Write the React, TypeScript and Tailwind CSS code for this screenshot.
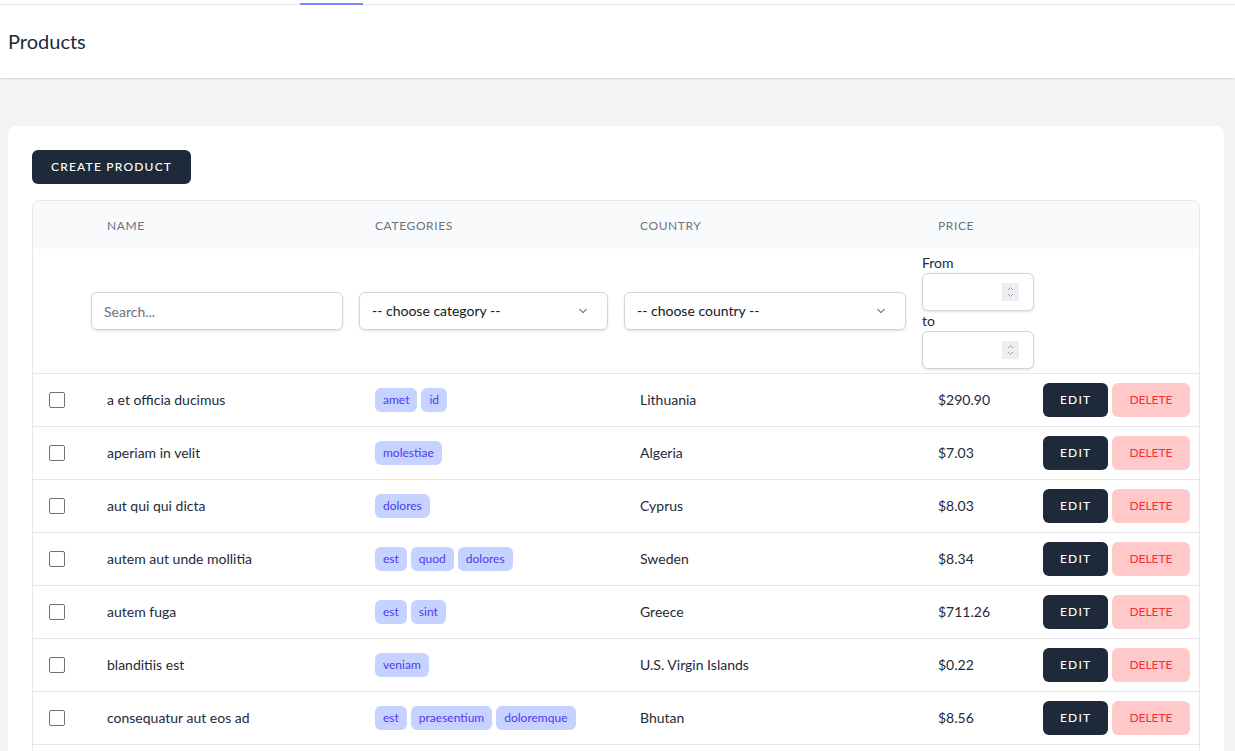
import React from "react";

type Product = {
  name: string;
  categories: string[];
  country: string;
  price: string;
};

const products: Product[] = [
  { name: "a et officia ducimus", categories: ["amet", "id"], country: "Lithuania", price: "$290.90" },
  { name: "aperiam in velit", categories: ["molestiae"], country: "Algeria", price: "$7.03" },
  { name: "aut qui qui dicta", categories: ["dolores"], country: "Cyprus", price: "$8.03" },
  { name: "autem aut unde mollitia", categories: ["est", "quod", "dolores"], country: "Sweden", price: "$8.34" },
  { name: "autem fuga", categories: ["est", "sint"], country: "Greece", price: "$711.26" },
  { name: "blanditiis est", categories: ["veniam"], country: "U.S. Virgin Islands", price: "$0.22" },
  { name: "consequatur aut eos ad", categories: ["est", "praesentium", "doloremque"], country: "Bhutan", price: "$8.56" },
];

function Chevron() {
  return (
    <svg className="w-4 h-4 text-gray-500" fill="none" viewBox="0 0 20 20" strokeWidth={1.5} stroke="currentColor">
      <path strokeLinecap="round" strokeLinejoin="round" d="M6 8l4 4 4-4" />
    </svg>
  );
}

function NumberBox() {
  return (
    <div className="flex items-center h-[38px] w-[112px] border border-gray-300 rounded-md shadow-sm bg-white pl-3 pr-[14px]">
      <div className="flex-1" />
      <div className="w-[17px] h-[18px] bg-gray-200/70 flex flex-col items-center justify-center">
        <svg className="w-[9px] h-[14px] text-gray-400" fill="none" viewBox="0 0 9 14" strokeWidth={1} stroke="currentColor">
          <path d="M2 5l2.5-2.5L7 5" />
          <path d="M2 9l2.5 2.5L7 9" />
        </svg>
      </div>
    </div>
  );
}

export default function App() {
  return (
    <div className="min-h-screen bg-gray-100 text-gray-900" style={{ fontFamily: "Lato, 'Noto Sans', sans-serif" }}>
      {/* Nav (scrolled) */}
      <div className="h-[5px] bg-white border-b border-gray-200 relative">
        <div className="absolute left-[300px] bottom-[-1px] w-[63px] h-[2px] bg-indigo-400" />
      </div>

      {/* Header */}
      <header className="bg-white shadow">
        <div className="py-6 px-2">
          <h2 className="text-xl leading-[25px] text-gray-800">Products</h2>
        </div>
      </header>

      <main className="py-12">
        <div className="ml-2 mr-[11px] bg-white rounded-lg p-6">
          <button className="inline-flex items-center px-[18px] py-2 bg-gray-800 border border-transparent rounded-md text-xs leading-4 font-medium text-white uppercase tracking-widest">
            Create Product
          </button>

          <div className="mt-4 border border-gray-200 rounded-lg overflow-hidden">
            <table className="w-full table-fixed text-sm">
              <colgroup>
                <col className="w-[50px]" />
                <col className="w-[268px]" />
                <col className="w-[265px]" />
                <col className="w-[298px]" />
                <col className="w-[121px]" />
                <col />
              </colgroup>
              <thead>
                <tr className="bg-gray-50">
                  <th className="h-12" />
                  {["Name", "Categories", "Country", "Price"].map((h) => (
                    <th key={h} className="px-6 pt-px text-left text-xs font-normal uppercase tracking-wider text-gray-500">
                      {h}
                    </th>
                  ))}
                  <th />
                </tr>
                <tr>
                  <th />
                  <th className="px-2 font-normal">
                    <input
                      placeholder="Search..."
                      className="w-full h-[38px] border border-gray-300 rounded-md shadow-sm px-3 text-sm placeholder:text-gray-500"
                    />
                  </th>
                  <th className="px-2 font-normal">
                    <div className="flex items-center justify-between h-[38px] border border-gray-300 rounded-md shadow-sm pl-3 pr-4 text-sm text-gray-900">
                      <span>-- choose category --</span>
                      <Chevron />
                    </div>
                  </th>
                  <th className="px-2 font-normal">
                    <div className="flex items-center justify-between h-[38px] border border-gray-300 rounded-md shadow-sm pl-3 pr-4 text-sm text-gray-900">
                      <span>-- choose country --</span>
                      <Chevron />
                    </div>
                  </th>
                  <th className="px-2 py-1 font-normal text-left" colSpan={2}>
                    <div className="text-sm leading-5 text-gray-800">From</div>
                    <NumberBox />
                    <div className="text-sm leading-5 text-gray-800">to</div>
                    <NumberBox />
                  </th>
                </tr>
              </thead>
              <tbody>
                {products.map((p) => (
                  <tr key={p.name} className="border-t border-gray-200">
                    <td className="h-[53px] pl-4">
                      <div className="w-4 h-4 border-[1.5px] border-gray-500 rounded-[2px]" />
                    </td>
                    <td className="px-6 text-gray-800">{p.name}</td>
                    <td className="px-6">
                      <div className="flex gap-1">
                        {p.categories.map((c, i) => (
                          <span key={i} className="px-2 h-6 leading-6 rounded-md bg-indigo-200 text-indigo-600 text-xs">
                            {c}
                          </span>
                        ))}
                      </div>
                    </td>
                    <td className="px-6 text-gray-800">{p.country}</td>
                    <td className="px-6 text-gray-800">{p.price}</td>
                    <td className="px-2">
                      <div className="flex gap-1">
                        <button className="px-4 h-[34px] bg-gray-800 border border-transparent rounded-md text-xs font-medium text-white uppercase tracking-widest">
                          Edit
                        </button>
                        <button className="px-4 h-[34px] bg-red-200 border border-transparent rounded-md text-xs text-red-500 uppercase">
                          Delete
                        </button>
                      </div>
                    </td>
                  </tr>
                ))}
                {/* next row continues below the fold */}
                <tr className="border-t border-gray-200">
                  <td className="h-[53px]" colSpan={6} />
                </tr>
              </tbody>
            </table>
          </div>
        </div>
      </main>
    </div>
  );
}
